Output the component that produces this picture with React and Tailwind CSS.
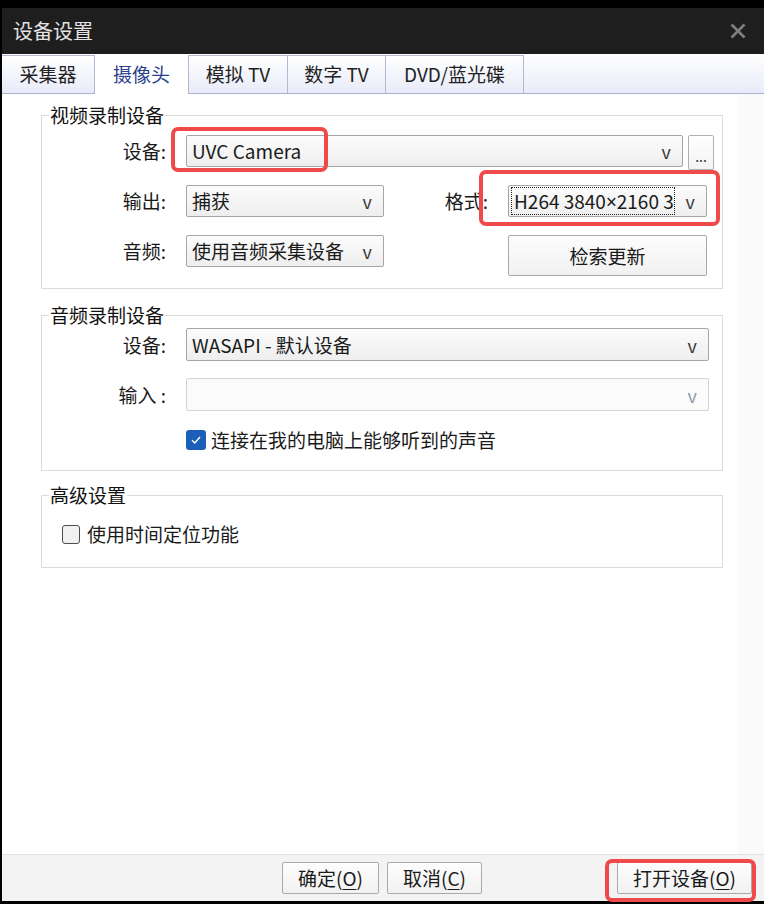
import React from "react";

function Combo({ w, h = "h-[32px]", text, disabled, focus }) {
  return (
    <div
      className={`flex ${h} ${w} items-center rounded-[2px] border ${
        disabled
          ? "border-[#d3d3d3] bg-[#fbfbfb]"
          : "border-[#a6a6a6] bg-linear-to-b from-[#fcfcfc] to-[#eeeeee]"
      }`}
    >
      <div className="flex min-w-0 flex-1 items-center pl-[5px]">
        {focus ? (
          <div className="ml-[-3px] h-[28px] w-[164px] overflow-hidden whitespace-nowrap border border-dotted border-[#222] pl-[2px] text-[19px] leading-[26px] text-[#1a1a1a]">
            {text}
          </div>
        ) : (
          <span className="whitespace-nowrap text-[19px] leading-[24px] text-[#1a1a1a]">
            {text}
          </span>
        )}
      </div>
      <span
        className={`pr-[11px] text-[18px] leading-[20px] ${
          disabled ? "text-[#8a9bb0]" : "text-[#3a3a3a]"
        }`}
      >
        v
      </span>
    </div>
  );
}

function Label({ w = "w-[124px]", children }) {
  return (
    <div
      className={`${w} shrink-0 text-right text-[19px] leading-[32px] text-[#1a1a1a]`}
    >
      {children}
    </div>
  );
}

function Btn({ w, h = "h-[32px]", children }) {
  return (
    <button
      className={`${w} ${h} flex items-center justify-center rounded-[2px] border border-[#a9a9a9] bg-linear-to-b from-[#fdfdfd] to-[#f1f1f1] text-[19px] leading-[24px] text-[#1a1a1a]`}
    >
      {children}
    </button>
  );
}

function Group({ title, className, children }) {
  return (
    <fieldset
      className={`w-[682px] border border-[#dcdcdc] px-0 ${className}`}
    >
      <legend className="ml-[7px] px-[1px] text-[19px] leading-[22px] text-[#111]">
        {title}
      </legend>
      {children}
    </fieldset>
  );
}

function Tab({ w, active, children }) {
  return (
    <div
      className={`${w} flex items-center justify-center border-r border-[#b3b9d4] text-[19px] ${
        active
          ? "-mb-px h-[39px] bg-white text-[#2c3f8e]"
          : "h-[38px] border-t bg-linear-to-b from-white to-[#e8ebf8] text-[#222]"
      }`}
    >
      {children}
    </div>
  );
}

export default function App() {
  return (
    <div className="relative flex h-[904px] w-[764px] flex-col bg-black pb-[3px] pl-[2px] pt-[8px] font-['Noto_Sans_CJK_SC','Noto_Sans',sans-serif]">
      {/* title bar */}
      <div className="flex h-[46px] shrink-0 items-center justify-between bg-[#1e1e1e] pl-[11px] pr-[18px]">
        <span className="text-[20px] leading-[24px] text-[#e4e4e4]">设备设置</span>
        <svg width="16" height="16" viewBox="0 0 16 16">
          <path d="M1.5 1.5 L14.5 14.5 M14.5 1.5 L1.5 14.5" stroke="#7e7e7e" strokeWidth="2.6" />
        </svg>
      </div>

      {/* tabs */}
      <div className="flex h-[40px] shrink-0 items-end border-b border-[#a9b1cf] bg-linear-to-b from-white to-[#e8ebf8]">
        <Tab w="w-[93px]">采集器</Tab>
        <Tab w="w-[94px]" active>
          摄像头
        </Tab>
        <Tab w="w-[99px]">模拟 TV</Tab>
        <Tab w="w-[98px]">数字 TV</Tab>
        <Tab w="w-[138px]">DVD/蓝光碟</Tab>
      </div>

      {/* body */}
      <div className="flex flex-1 bg-white">
        <div className="flex w-[736px] flex-col pl-[39px]">
          <Group title="视频录制设备" className="mt-[10px] pb-[12px]">
            <div className="mt-[9px] flex items-start">
              <Label>设备:</Label>
              <div className="ml-[20px]">
                <Combo w="w-[497px]" text="UVC Camera" />
              </div>
              <button className="ml-[5px] flex h-[35px] w-[26px] items-end justify-center rounded-[2px] border border-[#b0b0b0] bg-linear-to-b from-white to-[#f3f3f3] pb-[6px] text-[14px] leading-[14px] text-[#333]">
                ...
              </button>
            </div>
            <div className="mt-[15px] flex items-center">
              <Label>输出:</Label>
              <div className="ml-[20px]">
                <Combo w="w-[198px]" text="捕获" />
              </div>
              <Label w="w-[104px]">格式:</Label>
              <div className="ml-[20px]">
                <Combo
                  w="w-[199px]"
                  text={
                    <>
                      H264 3840<span className="font-['Noto_Sans',sans-serif]">×</span>2160 30fps
                    </>
                  }
                  focus
                />
              </div>
            </div>
            <div className="mt-[18px] flex items-start">
              <Label>音频:</Label>
              <div className="ml-[20px]">
                <Combo w="w-[198px]" text="使用音频采集设备" />
              </div>
              <div className="ml-[124px]">
                <Btn w="w-[199px]" h="h-[41px]">
                  检索更新
                </Btn>
              </div>
            </div>
          </Group>

          <Group title="音频录制设备" className="mt-[15px] pb-[20px]">
            <div className="mt-[2px] flex items-center">
              <Label>设备:</Label>
              <div className="ml-[20px]">
                <Combo w="w-[523px]" h="h-[33px]" text="WASAPI - 默认设备" />
              </div>
            </div>
            <div className="mt-[17px] flex items-center">
              <Label>输入 :</Label>
              <div className="ml-[20px]">
                <Combo w="w-[523px]" h="h-[33px]" text="" disabled />
              </div>
            </div>
            <div className="ml-[144px] mt-[18px] flex h-[21px] items-center">
              <div className="flex h-[20px] w-[20px] items-center justify-center rounded-[3px] bg-[#1c5fb8]">
                <svg width="12" height="12" viewBox="0 0 12 12">
                  <path d="M2 6.2 L4.8 9 L10 3" fill="none" stroke="white" strokeWidth="1.4" />
                </svg>
              </div>
              <span className="ml-[5px] text-[19px] leading-[22px] text-[#1a1a1a]">
                连接在我的电脑上能够听到的声音
              </span>
            </div>
          </Group>

          <Group title="高级设置" className="mt-[13px] pb-[23px]">
            <div className="ml-[20px] mt-[18px] flex h-[20px] items-center">
              <div className="h-[19px] w-[18px] rounded-[3px] border border-[#4d4d4d] bg-[#f1f1f1]" />
              <span className="ml-[7px] text-[19px] leading-[22px] text-[#1a1a1a]">
                使用时间定位功能
              </span>
            </div>
          </Group>
        </div>
        <div className="flex-1 bg-[#fafafa]" />
      </div>

      {/* footer */}
      <div className="flex h-[47px] shrink-0 items-start border-t border-[#e2e2e2] bg-[#f3f3f3] pl-[280px] pt-[7px]">
        <Btn w="w-[97px]">
          确定(<span className="underline underline-offset-[3px]">O</span>)
        </Btn>
        <div className="ml-[8px]">
          <Btn w="w-[95px]">
            取消(<span className="underline underline-offset-[3px]">C</span>)
          </Btn>
        </div>
        <div className="ml-[135px]">
          <Btn w="w-[135px]">
            打开设备(<span className="underline underline-offset-[3px]">O</span>)
          </Btn>
        </div>
      </div>

      {/* red annotation marks */}
      <div className="absolute left-[171px] top-[127px] h-[45px] w-[157px] rounded-[7px] border-[4px] border-[#ef4a4a]" />
      <div className="absolute left-[479px] top-[170px] h-[56px] w-[241px] rounded-[7px] border-[4px] border-[#ef4a4a]" />
      <div className="absolute left-[605px] top-[859px] h-[43px] w-[151px] rounded-[7px] border-[4px] border-[#ef4a4a]" />
    </div>
  );
}
